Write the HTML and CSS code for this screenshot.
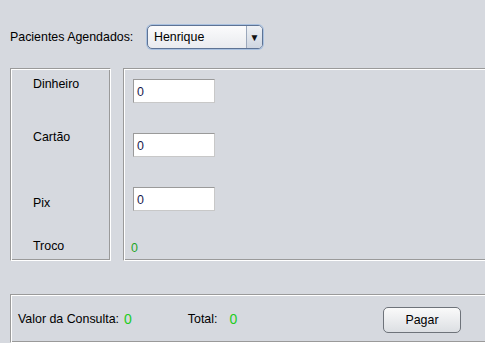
FILE: index.html
```html
<!DOCTYPE html>
<html>
<head>
<meta charset="utf-8">
<link rel="stylesheet" href="styles.css">
</head>
<body>
<div class="frame">
  <div class="top-row">
    <span class="lbl">Pacientes Agendados:</span>
    <div class="combo">
      <span class="combo-text">Henrique</span>
      <span class="combo-arrow">&#9660;</span>
    </div>
  </div>
  <div class="panels">
    <div class="etched left">
      <div class="l l1">Dinheiro</div>
      <div class="l l2">Cartão</div>
      <div class="l l3">Pix</div>
      <div class="l l4">Troco</div>
    </div>
    <div class="etched right">
      <div class="field f1">0</div>
      <div class="field f2">0</div>
      <div class="field f3">0</div>
      <div class="troco">0</div>
    </div>
  </div>
  <div class="etched bottom">
    <span class="lbl">Valor da Consulta:</span>
    <span class="val v1">0</span>
    <span class="lbl total">Total:</span>
    <span class="val v2">0</span>
    <button class="btn">Pagar</button>
  </div>
</div>
</body>
</html>
```
FILE: styles.css
```css
html, body {
  margin: 0;
  padding: 0;
  background: #d6d9df;
  overflow: hidden;
}
.frame {
  width: 485px;
  height: 343px;
  font-family: "Liberation Sans", Arial, sans-serif;
  font-size: 12.4px;
  color: #000;
  overflow: hidden;
}
.top-row {
  display: flex;
  align-items: center;
  height: 24px;
  padding: 25px 0 0 10px;
}
.top-row .lbl { width: 137px; }
.lbl { color: #000; }
.combo {
  width: 114px;
  height: 22px;
  border: 1px solid #5e7394;
  border-radius: 5px;
  box-shadow: 0 0 0 1px #a9c1e0;
  background: linear-gradient(#fbfbfc, #e9ebef);
  display: flex;
  align-items: center;
  box-sizing: content-box;
}
.combo-text {
  flex: 1;
  padding-left: 6px;
}
.combo-arrow {
  width: 15px;
  height: 22px;
  border-left: 1px solid #9aa7bb;
  background: linear-gradient(#eef1f5, #cfd6e1);
  border-radius: 0 4px 4px 0;
  font-size: 10px;
  display: flex;
  align-items: center;
  justify-content: center;
  color: #111;
}
.panels {
  display: flex;
  margin-top: 19px;
  padding-left: 10px;
  gap: 12px;
}
.etched {
  border: 1px solid;
  border-color: #9a9a9a #fff #fff #9a9a9a;
  box-shadow: inset 1px 1px #fff, inset -1px -1px #9a9a9a;
  box-sizing: border-box;
}
.left {
  width: 101px;
  height: 193px;
  position: relative;
}
.right {
  flex: 1;
  height: 193px;
  margin-right: -10px;
  padding: 10px 0 0 9px;
}
.l {
  position: absolute;
  left: 22px;
  line-height: 14px;
}
.l1 { top: 8px; }
.l2 { top: 61px; }
.l3 { top: 127px; }
.l4 { top: 170px; }
.field {
  width: 82px;
  height: 24px;
  box-sizing: border-box;
  background: #fff;
  border: 1px solid #a3a3a3;
  border-color: #9a9a9a #c8c8c8 #c8c8c8 #9a9a9a;
  color: #1a1a4d;
  padding: 5px 0 0 3px;
  line-height: 14px;
}
.f2 { margin-top: 30px; }
.f3 { margin-top: 30px; }
.troco {
  margin: 30px 0 0 -2px;
  color: #1fa51f;
  line-height: 14px;
}
.bottom {
  margin: 33px -10px 0 10px;
  height: 49px;
  display: flex;
  align-items: center;
  padding-left: 7px;
}
.val {
  color: #22cc22;
  font-size: 14px;
}
.v1 { margin-left: 5px; }
.total { margin-left: 56px; }
.v2 { margin-left: 12px; }
.btn {
  margin-left: auto;
  margin-right: 33px;
  width: 78px;
  height: 26px;
  border: 1px solid #6e737a;
  border-radius: 5px;
  background: linear-gradient(#fafafa, #dcdfe3);
  font-family: "Liberation Sans", Arial, sans-serif;
  font-size: 12.4px;
  color: #000;
  margin-top: 2px;
}
```
